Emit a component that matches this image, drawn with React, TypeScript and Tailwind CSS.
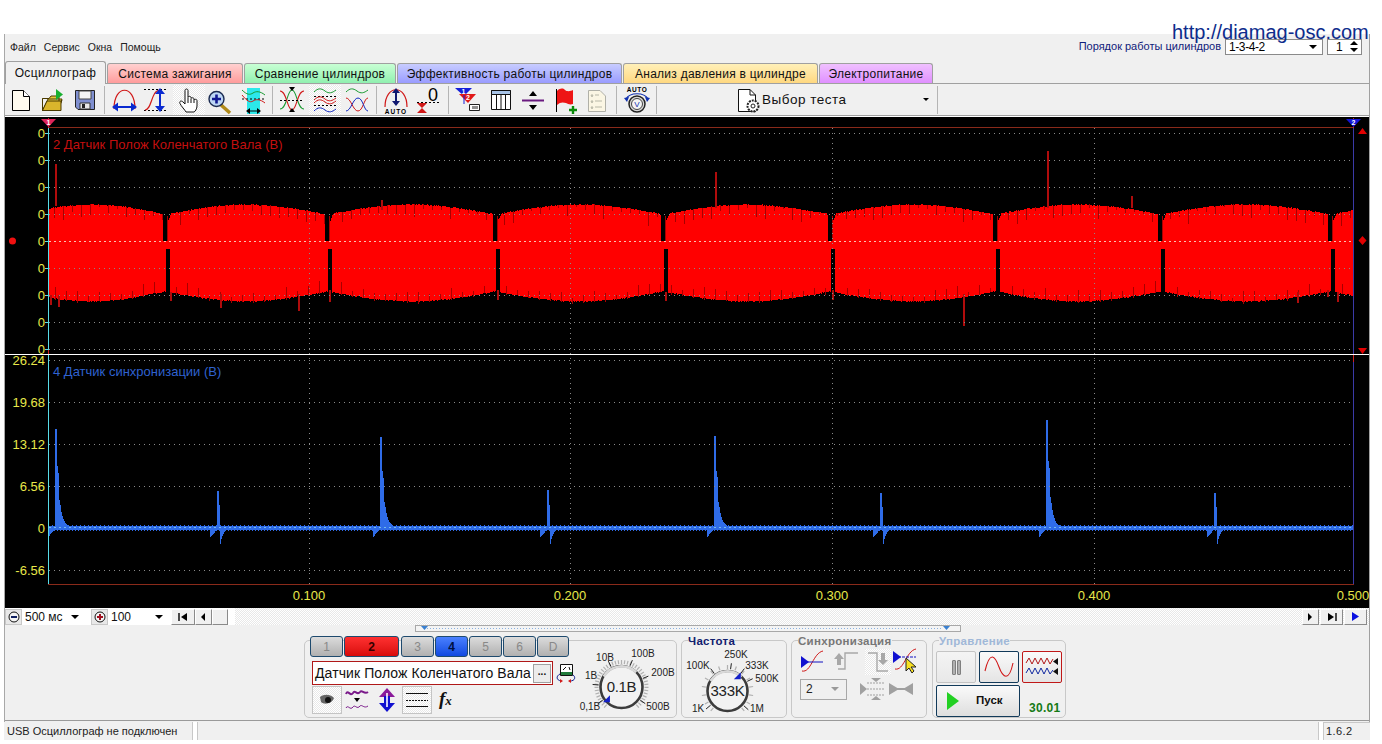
import type { ReactNode } from "react";

const FONT = "'Liberation Sans', Arial, sans-serif";

// simple seeded random so the wave is the same on each load
let seed = 12345;
const rnd = () => {
  seed = (seed * 1664525 + 1013904223) % 4294967296;
  return seed / 4294967296;
};

const gaps = [165, 327, 495, 663, 830, 995, 1160, 1330];

const buildRed = () => {
  let fill = "";
  let notch = "";
  const edges = [18, ...gaps, 1495];
  for (let x = 48; x < 1353; x++) {
    let i = 0;
    while (x > edges[i + 1]) i++;
    const t = (x - edges[i]) / (edges[i + 1] - edges[i]);
    const hump = Math.sin(Math.PI * t);
    const top = Math.round(214 - 10 * hump + rnd() * 1.2);
    const bot = Math.round(292 + 10 * hump - rnd() * 1.2);
    const g = gaps.find((v) => x >= v - 2 && x <= v + 6);
    if (g !== undefined) {
      const d = x - g;
      const upper = d >= -2 && d <= 2 ? 241 : top + Math.max(0, (6 - d) * 2);
      const lower = d >= 1 && d <= 4 ? 249 : bot;
      fill += `M${x + 0.5} ${upper}V${lower}`;
      if (d === 2) notch += `M${x + 0.5} 216V241`;
      continue;
    }
    fill += `M${x + 0.5} ${top}V${bot}`;
    if (x % 9 === 0) {
      notch += `M${x + 0.5} ${top}V${top + 2 + Math.round(rnd() * 12)}`;
    }
    if (x % 11 === 0) {
      notch += `M${x + 0.5} ${bot - 4 - Math.round(rnd() * 8)}V${bot + Math.round(rnd() * 2)}`;
    }
  }
  return { fill, notch };
};

const redSpikes: [number, number, number][] = [
  [55, 164, 206], [381, 200, 210], [715, 172, 208], [1047, 151, 208], [1131, 196, 208],
  [50, 295, 305], [58, 295, 307], [220, 294, 308], [298, 294, 311], [170, 292, 301],
  [329, 290, 302], [497, 290, 300], [963, 294, 326], [1297, 292, 303], [1337, 292, 302],
  [1327, 290, 297], [665, 292, 301], [832, 290, 300],
];

const buildBlue = () => {
  const big: [number, number][] = [[55, 98], [380, 90], [714, 91], [1046, 107]];
  const small: [number, number][] = [[218, 36], [548, 37], [881, 34], [1215, 34]];
  let d = "";
  for (let x = 48; x < 1353; x++) {
    let top = 525 + (x % 4 === 0 ? 0 : 1);
    let bot = 531 - (x % 3 === 0 ? 0 : 1);
    for (const [s, h] of big) {
      const dx = x - s;
      if (dx >= 0 && dx < 18) {
        const k =
          dx < 2 ? 1 : dx === 2 ? 0.62 : dx === 3 ? 0.55 : dx === 4 ? 0.28 : 0.22 * Math.exp(-(dx - 5) / 3);
        top = Math.min(top, Math.round(527 - h * k));
      }
      if (dx < 0 && dx >= -7) bot = Math.max(bot, Math.round(528 + 9 * (-dx / 7)));
    }
    for (const [s, h] of small) {
      const dx = x - s;
      if (dx >= -1 && dx <= 0) top = Math.min(top, 527 - h);
      if (dx === 1) top = Math.min(top, 527 - h * 0.6);
      if (dx >= 2 && dx < 14) bot = Math.max(bot, Math.round(528 + 16 * Math.exp(-(dx - 2) / 3)));
      if (dx < -1 && dx >= -8) bot = Math.max(bot, Math.round(528 + 9 * (-dx / 8)));
    }
    d += `M${x + 0.5} ${top}V${bot}`;
  }
  return d;
};

const red = buildRed();
const blue = buildBlue();

const Yellow = ({ x, y, children, anchor = "end" }: { x: number; y: number; children: ReactNode; anchor?: "end" | "middle" }) => (
  <text x={x} y={y} fontSize="13" fill="#e8e84a" textAnchor={anchor} fontFamily={FONT}>
    {children}
  </text>
);

// everything is drawn in page coordinates, viewBox starts where the panel starts
const Scope = () => {
  const topLines = [133, 160, 187, 214, 268, 295, 322, 349];
  const botLines = [360, 402, 444, 486, 570];
  return (
    <svg width="1364" height="491" viewBox="5 117 1364 491" className="block bg-black">
      <g shapeRendering="crispEdges">
        <path d={red.fill} stroke="#ff0000" fill="none" />
        <path d={red.notch} stroke="#a80000" fill="none" />
        {redSpikes.map(([x, a, b], i) => (
          <path key={i} d={`M${x + 1} ${a}V${b}`} stroke="#b00c0c" strokeWidth="2" />
        ))}
        <path d={blue} stroke="#2f6ce8" fill="none" />
        {[...topLines, ...botLines].map((y) => (
          <path key={y} d={`M49 ${y + 0.5}H1353`} stroke="#8a8a8a" strokeDasharray="1 4" />
        ))}
        {[309, 570, 832, 1094].map((x) => (
          <path key={x} d={`M${x + 0.5} 128V584`} stroke="#8a8a8a" strokeDasharray="1 4" />
        ))}
        <path d="M49 241.5H1353" stroke="#ffc0b0" strokeDasharray="2 3" />
        <path d="M49 527.5H1353" stroke="#78bce8" strokeDasharray="2 3" />
        <path d="M48 127.5H1354M48 584.5H1354" stroke="#8a2a1a" />
        <path d="M48.5 127V584" stroke="#58dde8" />
        <path d="M48.5 118V128M48.5 350V355" stroke="#d02020" />
        <path d="M1353.5 127V584" stroke="#3a3aa8" strokeWidth="1" />
        <path d="M1353.5 355V362M1353.5 118V128" stroke="#d02020" />
        <path d="M5 354.5H1369" stroke="#ffffff" />
        {topLines.concat(241).map((y) => (
          <path key={y} d={`M45 ${y + 0.5}H48`} stroke="#58dde8" />
        ))}
      </g>
      {[133, 160, 187, 214, 241, 268, 295, 322, 349].map((y) => (
        <Yellow key={y} x={45} y={y + 5}>0</Yellow>
      ))}
      <Yellow x={45} y={365}>26.24</Yellow>
      <Yellow x={45} y={407}>19.68</Yellow>
      <Yellow x={45} y={449}>13.12</Yellow>
      <Yellow x={45} y={491}>6.56</Yellow>
      <Yellow x={45} y={533}>0</Yellow>
      <Yellow x={45} y={575}>-6.56</Yellow>
      <Yellow x={309} y={600} anchor="middle">0.100</Yellow>
      <Yellow x={570} y={600} anchor="middle">0.200</Yellow>
      <Yellow x={832} y={600} anchor="middle">0.300</Yellow>
      <Yellow x={1094} y={600} anchor="middle">0.400</Yellow>
      <Yellow x={1353} y={600} anchor="middle">0.500</Yellow>
      <text x={53} y={149} fontSize="13" fill="#c40f0f" fontFamily={FONT}>2 Датчик Полож Коленчатого Вала (В)</text>
      <text x={53} y={376} fontSize="13" fill="#2f62d0" fontFamily={FONT}>4 Датчик синхронизации (В)</text>
      <path d="M41 119H56L48.5 127Z" fill="#e0245a" />
      <text x={48.5} y={125} fontSize="7" fontWeight="bold" fill="#fff" textAnchor="middle" fontFamily={FONT}>1</text>
      <path d="M1346 119H1361L1353.5 127Z" fill="#1414d8" />
      <text x={1353.5} y={125} fontSize="7" fontWeight="bold" fill="#fff" textAnchor="middle" fontFamily={FONT}>2</text>
      <circle cx={12.5} cy={241} r={3.5} fill="#f01010" />
      <path d="M1358 134L1362.5 128L1367 134ZM1358 348H1367L1362.5 354ZM1362.5 236L1366.5 240.5L1362.5 245L1358.5 240.5Z" fill="#e00000" />
    </svg>
  );
};

const Ico = ({ children }: { children: ReactNode }) => (
  <svg width="32" height="30" viewBox="0 0 32 30" className="block shrink-0">{children}</svg>
);

const Sep = () => <div className="w-px h-[28px] mx-[3px] bg-[#b4b4b4] shrink-0" />;

const dither = "bg-[repeating-conic-gradient(#ffffff_0_25%,#e8e8e8_0_50%)] bg-[length:2px_2px]";

const Toolbar = () => (
  <div className="h-[32px] flex items-center border-b border-[#a0a0a0] bg-[#f0f0f0]">
    <Ico><path d="M7.5 5.5H18.5L24.5 11.5V25.5H7.5Z" fill="#fffbef" stroke="#000" /><path d="M18.5 5.5V11.5H24.5" fill="#fff" stroke="#000" /></Ico>
    <Ico>
      <path d="M5.5 13.5H12L14 11H22V23L25 14H11L5.5 25.5H21L25 15" fill="#e8c93c" stroke="#4a3a00" />
      <path d="M5.5 13.5V25.5L10 16H24V25.5H5.5Z" fill="#d9b52c" stroke="#4a3a00" />
      <path d="M19 4L26 9.5L19 15Z" fill="#18b030" />
    </Ico>
    <Ico>
      <path d="M6.5 5.5H25.5V24.5H9L6.5 22Z" fill="#7f8fd0" stroke="#222" />
      <path d="M10 6H22V14H10Z" fill="#f4f4f4" stroke="#444" />
      <path d="M11 18H21V24H11Z" fill="#e8e8e8" stroke="#333" />
      <path d="M13 19H16V23H13Z" fill="#222" />
    </Ico>
    <Sep />
    <Ico>
      <path d="M6 24C6 -1 27 -1 27 24" fill="none" stroke="#d01818" strokeWidth="1.2" />
      <path d="M9 22H24" stroke="#0a2ad0" strokeWidth="2" />
      <path d="M4 22L10 17.5V26.5ZM29 22L23 17.5V26.5Z" fill="#0a2ad0" />
    </Ico>
    <Ico>
      <path d="M4 4.5H27M4 25.5H27" stroke="#000" strokeDasharray="2 2" />
      <path d="M5 25C12 25 11 5 20 5" fill="none" stroke="#d01818" strokeWidth="1.2" />
      <path d="M20 8V22" stroke="#0a2ad0" strokeWidth="2" />
      <path d="M20 3L25 9H15ZM20 27L25 21H15Z" fill="#0a2ad0" />
    </Ico>
    <div className={`w-[32px] h-[30px] ml-px ${dither}`}>
      <Ico>
        <path d="M12 14V5.5C12 3.5 15 3.5 15 5.5V12.5C15 11 18 11 18 12.5V13.5C18 12.5 21 12.5 21 14V15C21 14 24 14 24 15.5V21C24 24 22 26.5 21 27H13C12 25 8 21 7 18.5C6 16.5 8 15 10 17L12 19Z" fill="#fff" stroke="#111" />
        <path d="M15 13V18M18 14V18M21 15V18" stroke="#111" />
      </Ico>
    </div>
    <Ico>
      <path d="M15 19L25 28" stroke="#b08a1a" strokeWidth="3.5" />
      <circle cx="11.5" cy="14" r="7.5" fill="#bcd6f4" stroke="#1a2a50" strokeWidth="1.4" />
      <path d="M7 14H16M11.5 9.5V18.5" stroke="#101890" strokeWidth="2.6" />
    </Ico>
    <Ico>
      <path d="M10 3H23V29H10Z" fill="#2ce8ea" />
      <path d="M5 5C10 10 13 10 16 8C19 6 23 6 28 10" fill="none" stroke="#189a30" />
      <path d="M5 14H28" stroke="#000" strokeDasharray="2 2" />
      <path d="M5 10C10 16 13 18 16 16C19 14 23 14 28 18" fill="none" stroke="#d01818" />
      <path d="M11 26H22" stroke="#000" />
      <path d="M9 26L13 23V29ZM24 26L20 23V29Z" fill="#000" />
    </Ico>
    <Sep />
    <Ico>
      <path d="M4 24C11 24 11 5 16 5C21 5 21 24 28 24" fill="none" stroke="#1a9a30" strokeWidth="1.1" />
      <path d="M4 6C11 6 11 25 16 25C21 25 21 6 28 6" fill="none" stroke="#d01818" strokeWidth="1.1" />
      <path d="M4 15.5H28" stroke="#000" strokeDasharray="2 2" />
      <path d="M13 2H19L16 6ZM13 27H19L16 23Z" fill="#000" />
    </Ico>
    <div className={`w-[32px] h-[30px] ml-px ${dither}`}>
      <Ico>
        <path d="M5 7C9 3 12 3 16 6C20 9 23 8 27 5" fill="none" stroke="#189a30" />
        <path d="M5 11.5H27M5 20.5H27" stroke="#000" strokeDasharray="2 2" />
        <path d="M5 15C9 11 12 11 16 14C20 17 23 16 27 13M5 18C9 14 12 14 16 17C20 20 23 19 27 16" fill="none" stroke="#d01818" />
        <path d="M5 26C9 22 12 22 16 25C20 28 23 27 27 24" fill="none" stroke="#1028c0" />
      </Ico>
    </div>
    <Ico>
      <path d="M5 7C9 3 12 3 16 6C20 9 23 8 27 5" fill="none" stroke="#189a30" />
      <path d="M5 13C10 13 12 26 17 26C22 26 23 13 27 13" fill="none" stroke="#d01818" />
      <path d="M5 26C10 26 12 13 17 13C22 13 23 26 27 26" fill="none" stroke="#1028c0" />
    </Ico>
    <Sep />
    <Ico>
      <path d="M5 22C5 -1 27 -1 27 22" fill="none" stroke="#d01818" strokeWidth="1.2" />
      <path d="M16 7V18" stroke="#101870" strokeWidth="2" />
      <path d="M16 3L20 8H12ZM16 21L20 16H12Z" fill="#101870" />
      <text x="16" y="29" fontSize="6.5" fontWeight="bold" textAnchor="middle" fontFamily={FONT} letterSpacing="1">AUTO</text>
    </Ico>
    <div className="ml-px">
      <Ico>
        <path d="M4 17.5H26" stroke="#000" strokeDasharray="2 2" />
        <path d="M4 18H14L9 23ZM4 28H14L9 23Z" fill="#d01818" />
        <text x="20" y="16" fontSize="18" textAnchor="middle" fontFamily={FONT}>0</text>
      </Ico>
    </div>
    <Sep />
    <div className="ml-px">
      <Ico>
        <path d="M2 3H19L11 11Z" fill="#1420d8" />
        <path d="M6 9H23L15 18Z" fill="#e01818" />
        <text x="10.5" y="9" fontSize="7" fontWeight="bold" fill="#fff" textAnchor="middle" fontFamily={FONT}>1</text>
        <text x="15" y="15" fontSize="7" fontWeight="bold" fill="#fff" textAnchor="middle" fontFamily={FONT}>2</text>
        <path d="M11 10V19" stroke="#1420d8" />
        <path d="M16.5 19.5H26.5V25.5H16.5Z" fill="#fff" stroke="#222" />
        <path d="M20 21V24M22 21V24M24 21V24" stroke="#222" />
      </Ico>
    </div>
    <Ico>
      <path d="M6.5 5.5H25.5V24.5H6.5Z" fill="#fff" stroke="#111" />
      <path d="M6.5 5.5H25.5V9.5H6.5Z" fill="#a8c4e8" stroke="#111" />
      <path d="M11.5 10V24M16 10V24M20.5 10V24" stroke="#111" />
    </Ico>
    <Ico>
      <path d="M5 15.5H27" stroke="#6a1a80" strokeWidth="2" />
      <path d="M16 6L20 11H12ZM16 25L20 20H12Z" fill="#000" />
    </Ico>
    <Ico>
      <path d="M7.5 4V27" stroke="#000" />
      <path d="M8 6C11 3 14 3 16 5C18 7 22 6 24 5V19C21 20 19 19 17 18C14 17 11 17 8 20Z" fill="#ee1515" />
      <path d="M20 25H28M24 21V29" stroke="#0a8a0a" strokeWidth="2.4" />
    </Ico>
    <Ico>
      <path d="M7.5 5.5H19L24.5 11V26.5H7.5Z" fill="#fbf6e4" stroke="#b0b0a8" />
      <path d="M10 10H12L11 12ZM10 16H12L11 18ZM10 22H12L11 24ZM14 10H18M14 16H21M14 22H21" fill="none" stroke="#b8b8a8" />
    </Ico>
    <Sep />
    <div className="ml-[1px]">
      <Ico>
        <text x="16" y="7" fontSize="6.5" fontWeight="bold" textAnchor="middle" fontFamily={FONT} letterSpacing="0.6">AUTO</text>
        <path d="M5 14C9 7 23 7 27 14" fill="none" stroke="#1030b0" strokeWidth="1.2" />
        <path d="M3 13L8 12L6 17ZM29 13L24 12L26 17Z" fill="#1030b0" />
        <circle cx="16" cy="19" r="8" fill="#d8d8d8" stroke="#222" strokeWidth="1.5" />
        <circle cx="16" cy="19" r="5.5" fill="#f4f4f4" stroke="#444" />
        <text x="16" y="22" fontSize="8" textAnchor="middle" fontFamily={FONT} fill="#1030b0">V</text>
      </Ico>
    </div>
    <Sep />
    <div className="w-[277px] flex items-center h-[30px]">
      <div className="ml-[76px] shrink-0 w-[26px]">
        <svg width="24" height="26" viewBox="0 0 24 26" className="block">
          <path d="M2.5 2.5H14L19.5 8V24.5H2.5Z" fill="#fff" stroke="#111" />
          <path d="M14 2.5V8H19.5" fill="none" stroke="#111" />
          <circle cx="17" cy="19" r="5.5" fill="#fff" stroke="#222" strokeWidth="2" strokeDasharray="2 1" />
          <circle cx="17" cy="19" r="2" fill="#fff" stroke="#222" />
        </svg>
      </div>
      <span className="text-[13.5px] tracking-[0.5px] text-[#111] pt-[2px]">Выбор теста</span>
      <span className="ml-auto mr-[8px] w-0 h-0 border-x-[3px] border-x-transparent border-t-[3px] border-t-black" />
    </div>
    <div className="w-px h-[28px] bg-[#b4b4b4]" />
  </div>
);

const tabs = [
  { label: "Система зажигания", cls: "w-[136px] from-[#ffd0d0] to-[#ff9c9c]" },
  { label: "Сравнение цилиндров", cls: "w-[152px] from-[#c8ffd4] to-[#90f0b0]" },
  { label: "Эффективность работы цилиндров", cls: "w-[225px] from-[#c8ccff] to-[#9a9cff]" },
  { label: "Анализ давления в цилиндре", cls: "w-[195px] from-[#fff0b8] to-[#ffd880]" },
  { label: "Электропитание", cls: "w-[114px] from-[#f0c0ff] to-[#e090ff]" },
];

const TabStrip = () => (
  <div className="h-[24px] flex items-end gap-px border-b border-[#a0a0a0] relative">
    <div className="w-[101px] h-[23px] -mb-px bg-[#f0f0f0] border border-b-0 border-[#a0a0a0] rounded-t-[3px] flex items-center justify-center text-[12px] tracking-[0.4px] text-[#111] z-10">
      Осциллограф
    </div>
    {tabs.map((t) => (
      <div
        key={t.label}
        className={`h-[20px] bg-gradient-to-b ${t.cls} border border-b-0 border-[#a0a0a0] rounded-t-[3px] flex items-center justify-center text-[12px] tracking-[0.25px] text-[#111]`}
      >
        {t.label}
      </div>
    ))}
  </div>
);

const MenuRow = () => (
  <div className="h-[26px] flex items-center relative">
    <div className="flex gap-[8px] pl-[5px] text-[10.5px] text-[#222] pt-[1px]">
      <span>Файл</span>
      <span>Сервис</span>
      <span>Окна</span>
      <span>Помощь</span>
    </div>
    <div className="ml-auto flex items-center mr-[7px] -mt-[1px]">
      <span className="text-[11px] text-[#10207a] mr-[4px]">Порядок работы цилиндров</span>
      <div className="w-[98px] h-[16px] bg-white border border-[#8a8a8a] flex items-center pl-[3px] text-[12px] leading-[14px] tracking-[-0.4px]">
        1-3-4-2
        <span className="ml-auto mr-[5px] w-0 h-0 border-x-[4px] border-x-transparent border-t-[4px] border-t-black" />
      </div>
      <div className="w-[35px] h-[16px] ml-[4px] bg-white border border-[#8a8a8a] flex items-center pl-[8px] text-[12px] leading-[14px]">
        1
        <span className="ml-auto mr-[3px] flex flex-col gap-[3px]">
          <span className="block w-0 h-0 border-x-[4px] border-x-transparent border-b-[4px] border-b-black" />
          <span className="block w-0 h-0 border-x-[4px] border-x-transparent border-t-[4px] border-t-black" />
        </span>
      </div>
    </div>
  </div>
);

const NavBtn = ({ w, children }: { w: string; children: ReactNode }) => (
  <div className={`${w} h-[16px] bg-[#f0f0f0] border-r border-b border-[#8a8a8a] border-t border-l border-t-white border-l-white flex items-center justify-center`}>
    {children}
  </div>
);

const TimeBar = () => (
  <div className={`h-[17px] flex items-center ${dither}`}>
    <div className="w-[230px] h-[17px] bg-white flex items-center text-[12px] text-[#111]">
      <div className="w-[17px] h-[16px] bg-[#e8e8e8] border border-[#c8c8c8] flex items-center justify-center">
        <svg width="12" height="12" viewBox="0 0 12 12"><circle cx="6" cy="6" r="5" fill="#f4f4f4" stroke="#111" /><path d="M3 6H9" stroke="#102060" strokeWidth="2" /></svg>
      </div>
      <span className="w-[49px] pl-[3px]">500 мс</span>
      <span className="w-0 h-0 border-x-[4px] border-x-transparent border-t-[4px] border-t-black" />
      <span className="w-[12px]" />
      <div className="w-[17px] h-[16px] bg-[#e8e8e8] border border-[#c8c8c8] flex items-center justify-center">
        <svg width="12" height="12" viewBox="0 0 12 12"><circle cx="6" cy="6" r="5" fill="#f4f4f4" stroke="#111" /><path d="M3 6H9M6 3V9" stroke="#a01020" strokeWidth="2" /></svg>
      </div>
      <span className="w-[47px] pl-[3px]">100</span>
      <span className="w-0 h-0 border-x-[4px] border-x-transparent border-t-[4px] border-t-black" />
      <span className="w-[8px]" />
      <NavBtn w="w-[24px]"><svg width="10" height="8" viewBox="0 0 10 8"><path d="M1 0V8" stroke="#000" strokeWidth="1.4" /><path d="M9 0V8L3 4Z" /></svg></NavBtn>
      <NavBtn w="w-[17px]"><svg width="5" height="8" viewBox="0 0 5 8"><path d="M4 0V8L0 4Z" /></svg></NavBtn>
      <NavBtn w="w-[16px]"><span /></NavBtn>
    </div>
    <div className="ml-auto mr-[2px] flex gap-px">
      <NavBtn w="w-[17px]"><svg width="5" height="8" viewBox="0 0 5 8"><path d="M0 0V8L4 4Z" /></svg></NavBtn>
      <NavBtn w="w-[23px]"><svg width="10" height="8" viewBox="0 0 10 8"><path d="M1 0V8L7 4Z" /><path d="M9 0V8" stroke="#000" strokeWidth="1.4" /></svg></NavBtn>
      <NavBtn w="w-[23px]"><svg width="9" height="9" viewBox="0 0 9 9"><path d="M1 0V9L8 4.5Z" fill="#0a10e0" /></svg></NavBtn>
    </div>
  </div>
);

const Splitter = () => (
  <div className="h-[15px] relative">
    <div className="absolute left-[410px] top-0 w-[546px] h-[7px] bg-[#f4f4f4] border border-[#a8a8a8] flex items-center px-[3px] gap-[4px] overflow-hidden">
      <svg width="532" height="5" viewBox="0 0 532 5" className="block">
        <path d="M8 2.5H524" stroke="#8ab0e0" strokeDasharray="1 2" />
        <path d="M2 0H9L5.5 4ZM524 0H531L527.5 4Z" fill="#3a80d0" />
      </svg>
    </div>
  </div>
);

const chanBtn = "h-[21px] rounded-[3px] border border-[#1e4a6e] flex items-center justify-center text-[12px]";

const Knob = ({ labels, value, cx, cy, r, w, ang, thick, marks }: {
  labels: [string, number, number][];
  value: string;
  cx: number;
  cy: number;
  r: number;
  w: number;
  ang: number;
  thick: boolean;
  marks: number[];
}) => {
  const ticks: ReactNode[] = [];
  for (let a = -140; a <= 140; a += thick ? 7 : 20) {
    const rad = ((a - 90) * Math.PI) / 180;
    ticks.push(
      <line
        key={a}
        x1={cx + Math.cos(rad) * (r + 2)}
        y1={cy + Math.sin(rad) * (r + 2)}
        x2={cx + Math.cos(rad) * (r + 6)}
        y2={cy + Math.sin(rad) * (r + 6)}
        stroke="#b0b0b0"
        strokeWidth="1.2"
      />
    );
  }
  marks.forEach((a) => {
    const rad = ((a - 90) * Math.PI) / 180;
    ticks.push(
      <line
        key={`m${a}`}
        x1={cx + Math.cos(rad) * (r + 2)}
        y1={cy + Math.sin(rad) * (r + 2)}
        x2={cx + Math.cos(rad) * (r + 8)}
        y2={cy + Math.sin(rad) * (r + 8)}
        stroke="#222"
      />
    );
  });
  const rad = ((ang - 90) * Math.PI) / 180;
  const mx = cx + Math.cos(rad) * (r - 2);
  const my = cy + Math.sin(rad) * (r - 2);
  return (
    <svg width={w} height="76" viewBox={`0 0 ${w} 76`} className="block shrink-0">
      {ticks}
      <circle cx={cx} cy={cy} r={r} fill="#f2f2f2" stroke="#3c3c3c" strokeWidth="2.6" />
      <path d={`M${cx - r * 0.85} ${cy - r * 0.5}A${r} ${r} 0 0 1 ${cx + r * 0.7} ${cy - r * 0.7}`} fill="none" stroke="#d8d8d8" strokeWidth="2.6" />
      <path d={`M${mx - 4} ${my + 3}L${mx + 3} ${my - 4}L${mx + 3} ${my + 3}Z`} fill="#1420c8" />
      <text x={cx} y={cy + 5} fontSize="15" textAnchor="middle" fontFamily={FONT} fill="#222" letterSpacing="-0.3">{value}</text>
      {labels.map(([t, x, y]) => (
        <text key={t} x={x} y={y} fontSize="10" textAnchor="middle" fontFamily={FONT} fill="#222">{t}</text>
      ))}
    </svg>
  );
};

const Panel = ({ title, color, w, children }: { title?: string; color?: string; w: string; children: ReactNode }) => (
  <div className={`${w} h-[78px] relative rounded-[5px] border border-[#c8c8c8] shrink-0`}>
    {title && (
      <span className={`absolute left-[6px] -top-[6px] text-[11.5px] leading-[12px] font-bold bg-[#f0f0f0] tracking-[0.3px] ${color}`}>{title}</span>
    )}
    {children}
  </div>
);

const ChannelPanel = () => (
  <Panel w="w-[373px]">
    <div className="absolute -top-[5px] left-[5px] flex gap-px">
      <div className={`${chanBtn} w-[33px] bg-gradient-to-b from-[#dcdcdc] to-[#b0b0b0] text-[#888]`}>1</div>
      <div className={`${chanBtn} w-[55px] bg-gradient-to-b from-[#ff3030] to-[#d80808] font-bold text-[#300]`}>2</div>
      <div className={`${chanBtn} w-[33px] ml-px bg-gradient-to-b from-[#dcdcdc] to-[#b0b0b0] text-[#888]`}>3</div>
      <div className={`${chanBtn} w-[33px] bg-gradient-to-b from-[#4a80ff] to-[#1048e0] font-bold text-[#001040]`}>4</div>
      <div className={`${chanBtn} w-[33px] bg-gradient-to-b from-[#dcdcdc] to-[#b0b0b0] text-[#888]`}>5</div>
      <div className={`${chanBtn} w-[33px] bg-gradient-to-b from-[#dcdcdc] to-[#b0b0b0] text-[#888]`}>6</div>
      <div className={`${chanBtn} w-[32px] bg-gradient-to-b from-[#dcdcdc] to-[#b0b0b0] text-[#888]`}>D</div>
    </div>
    <div className="flex items-start h-full pt-[20px] pl-[7px]">
      <div className="w-[267px] shrink-0">
        <div className="flex items-center">
          <div className="w-[241px] h-[24px] bg-white border border-[#b01818] flex items-center pl-[2px] text-[14px] tracking-[0.1px] text-[#111] whitespace-nowrap overflow-hidden">
            Датчик Полож Коленчатого Вала
            <span className="absolute left-[228px] w-[18px] h-[19px] bg-[#ececec] border border-[#a0a0a0] text-[10px] font-bold leading-[14px] text-center">...</span>
          </div>
          <svg width="20" height="20" viewBox="0 0 20 20" className="ml-[3px] block">
            <path d="M4.5 1.5H16.5V12.5H4.5Z" fill="#fff" stroke="#111" />
            <path d="M5 9H16V12H5Z" fill="#207a3a" />
            <path d="M7 7L10 4M13 4L14 7" stroke="#111" />
            <path d="M4 11C0 13 0 17 5 18M17 12C20 14 19 18 14 18" fill="none" stroke="#102090" />
            <path d="M4 16L7 18L4 20ZM15 16L12 18L15 20Z" fill="#d01818" />
          </svg>
        </div>
        <div className="flex items-center mt-px">
          <div className={`w-[30px] h-[28px] border border-[#c4c4c4] flex items-center justify-center ${dither}`}>
            <svg width="16" height="12" viewBox="0 0 16 12"><path d="M1 3C5 0 11 0 15 4C13 10 5 11 2 8Z" fill="#666" /><circle cx="9" cy="6" r="3" fill="#111" /></svg>
          </div>
          <svg width="24" height="24" viewBox="0 0 24 24" className="ml-[3px] block">
            <path d="M1 6C3 1 5 9 8 5C10 1 12 8 15 4C17 1 19 7 23 4" fill="none" stroke="#7a1a8a" strokeWidth="2" />
            <path d="M9 10H15L12 14Z" fill="#000" />
            <path d="M1 20C3 16 5 23 8 19C10 16 12 22 15 18C17 16 19 21 23 18" fill="none" stroke="#7a1a8a" />
          </svg>
          <svg width="20" height="24" viewBox="0 0 20 24" className="ml-[8px] block">
            <path d="M10 0L18 9H2Z" fill="#8a1a9a" />
            <path d="M10 24L18 15H2Z" fill="#1010d0" />
            <path d="M7 8H13V16H7Z" fill="#1010d0" />
            <path d="M10 5V19" stroke="#fff" strokeWidth="1.6" />
          </svg>
          <div className={`w-[30px] h-[28px] ml-[5px] border border-[#c4c4c4] flex items-center justify-center ${dither}`}>
            <svg width="22" height="20" viewBox="0 0 22 20"><path d="M0 3.5H22M0 16.5H22" stroke="#111" /><path d="M0 10.5H22" stroke="#111" strokeDasharray="2 1" /></svg>
          </div>
          <span className="ml-[7px] font-['Liberation_Serif',serif] italic font-bold text-[19px] leading-[18px] text-[#111]">
            f<span className="text-[13px]">x</span>
          </span>
        </div>
      </div>
      <div className="-mt-[20px]">
        <Knob
          w={98}
          cx={42.5}
          cy={46}
          r={21}
          ang={-130}
          thick
          marks={[-125, -85, -27, 22, 68, 125]}
          value="0.1В"
          labels={[["10В", 26, 20], ["100В", 64, 16], ["1В", 12, 38], ["200В", 84, 35], ["0,1В", 11, 69], ["500В", 79, 69]]}
        />
      </div>
    </div>
  </Panel>
);

const FreqPanel = () => (
  <Panel title="Частота" color="text-[#10206e]" w="w-[106px]">
    <Knob
      w={104}
      cx={45.5}
      cy={50}
      r={20}
      ang={35}
      thick={false}
      marks={[-37, 8, 37, 64, -130, 132]}
      value="333K"
      labels={[["250K", 54, 17], ["100K", 16, 28], ["333K", 75, 28], ["500K", 85, 41], ["1K", 16, 71], ["1M", 75, 71]]}
    />
  </Panel>
);

const SyncPanel = () => (
  <Panel title="Синхронизация" color="text-[#777]" w="w-[136px]">
    <div className="flex items-center pt-[8px] pl-[7px] gap-[1px]">
      <svg width="32" height="26" viewBox="0 0 32 26" className="block">
        <path d="M3 22C12 24 14 4 24 2" fill="none" stroke="#d01818" />
        <path d="M2 13H24" stroke="#1010c0" />
        <path d="M2 7L10 13L2 19Z" fill="#1010d0" />
      </svg>
      <svg width="32" height="26" viewBox="0 0 32 26" className="block">
        <path d="M6 20H13V4H26" fill="none" stroke="#a8a8a8" strokeWidth="1.4" />
        <path d="M7 4L12 10H9V16H5V10H2Z" fill="#a8a8a8" />
      </svg>
      <div className={`w-[26px] h-[26px] ${dither}`}>
        <svg width="26" height="26" viewBox="0 0 26 26" className="block">
          <path d="M3 4H12V22H23" fill="none" stroke="#a8a8a8" strokeWidth="1.4" />
          <path d="M16 4H20V11H23L18 16L13 11H16Z" fill="#a8a8a8" />
        </svg>
      </div>
      <svg width="34" height="28" viewBox="0 0 34 28" className="block -mt-[2px]">
        <path d="M3 22C12 24 14 4 24 2" fill="none" stroke="#d01818" />
        <path d="M2 10H24" stroke="#1010c0" strokeDasharray="3 1" />
        <path d="M1 4L9 10L1 16Z" fill="#1010d0" />
        <path d="M14 11V24L17 21L20 26L22 24L19 20H24Z" fill="#f8e020" stroke="#222" />
      </svg>
    </div>
    <div className="flex items-center pl-[8px] mt-[3px]">
      <div className="w-[47px] h-[21px] border border-[#a8a8a8] flex items-center pl-[5px] text-[12px] text-[#222]">
        2
        <span className="ml-auto mr-[7px] w-0 h-0 border-x-[4px] border-x-transparent border-t-[4px] border-t-[#999]" />
      </div>
      <svg width="26" height="22" viewBox="0 0 26 22" className="block ml-[12px]">
        <path d="M1 5L8 11L1 17Z" fill="#a0a0a0" />
        <path d="M8 5H25M8 17H25M8 11H25" stroke="#a0a0a0" strokeDasharray="2 1" />
        <path d="M12 0H22L17 4ZM12 22H22L17 18Z" fill="#a0a0a0" />
      </svg>
      <svg width="24" height="14" viewBox="0 0 24 14" className="block ml-[4px]">
        <path d="M0 1L10 7L0 13ZM24 1L14 7L24 13Z" fill="#a0a0a0" />
        <path d="M0 7H24" stroke="#a0a0a0" strokeWidth="2" />
      </svg>
    </div>
  </Panel>
);

const ControlPanel = () => (
  <Panel title="Управление" color="text-[#a0b8d8]" w="w-[134px] ml-px">
    <div className="flex gap-[3px] pt-[10px] pl-[3px]">
      <div className="w-[40px] h-[32px] rounded-[2px] border border-[#c4c4c4] bg-gradient-to-b from-[#f4f4f4] to-[#e8e8e8] flex items-center justify-center gap-px">
        <span className="w-[4px] h-[15px] rounded-[1px] bg-[#b0b0b0] border border-[#808080]" />
        <span className="w-[4px] h-[15px] rounded-[1px] bg-[#b0b0b0] border border-[#808080]" />
      </div>
      <div className="w-[40px] h-[32px] rounded-[2px] border border-[#123a5a] bg-gradient-to-b from-[#fafafa] to-[#e4e4e4] flex items-center justify-center">
        <svg width="30" height="22" viewBox="0 0 30 22"><path d="M1 15C6 -6 11 0 15 11C19 22 25 26 29 7" fill="none" stroke="#d01818" strokeWidth="1.1" /></svg>
      </div>
      <div className="w-[40px] h-[32px] rounded-[2px] border border-[#c01818] bg-gradient-to-b from-[#fafafa] to-[#e4e4e4] flex items-center justify-center">
        <svg width="34" height="24" viewBox="0 0 34 24">
          <path d="M1 8L4 3L7 9L10 3L13 9L16 3L19 9L22 3L25 9L28 4" fill="none" stroke="#b01818" />
          <path d="M1 18L4 13L7 19L10 13L13 19L16 13L19 19L22 13L25 19L28 15" fill="none" stroke="#1028a0" />
          <path d="M33 3V10L28 6.5ZM33 13V20L28 16.5Z" fill="#111" />
        </svg>
      </div>
    </div>
    <div className="flex items-center pl-[3px] mt-[2px]">
      <div className="w-[84px] h-[32px] rounded-[2px] border border-[#123a5a] bg-gradient-to-b from-[#fafafa] to-[#dedede] flex items-center">
        <svg width="14" height="20" viewBox="0 0 14 20" className="ml-[9px] block"><path d="M1 1L13 10L1 19Z" fill="#22d022" /></svg>
        <span className="ml-[16px] text-[11.5px] font-bold text-[#111]">Пуск</span>
      </div>
      <span className="ml-[9px] mt-[13px] text-[12px] font-bold text-[#157a15] tracking-[0.3px]">30.01</span>
    </div>
  </Panel>
);

const StatusBar = () => (
  <div className="h-[18px] flex gap-[4px] text-[11px] text-[#222]">
    <div className="w-[189px] bg-[#f0f0f0] border-r border-[#c8c8c8] flex items-center pl-[3px]">USB Осциллограф не подключен</div>
    <div className="w-[1122px] bg-[#f0f0f0] border-l border-r border-[#c8c8c8]" />
    <div className="flex-1 bg-[#f0f0f0] border-l border-t border-[#c8c8c8] flex items-center pl-[2px] text-[11px] tracking-[0.4px]">1.6.2</div>
  </div>
);

export default function App() {
  return (
    <div className="w-[1382px] h-[744px] bg-white overflow-hidden relative pt-[34px] pl-[4px]" style={{ fontFamily: FONT }}>
      <a className="absolute z-20 left-[1172px] top-[21px] text-[20px] leading-[22px] text-[#0d2c8c]">http://diamag-osc.com</a>
      <div className="w-[1366px] border-x border-[#a0a0a0] border-l-[#a8a8a8] bg-[#f0f0f0]">
        <MenuRow />
        <TabStrip />
        <Toolbar />
        <div className="h-px bg-white" />
        <Scope />
        <TimeBar />
        <Splitter />
        <div className="flex h-[80px] pl-[299px] gap-[4px]">
          <ChannelPanel />
          <FreqPanel />
          <SyncPanel />
          <ControlPanel />
        </div>
        <div className="h-px bg-[#9a9a9a]" />
        <div className="h-px" />
      </div>
      <div className="w-[1366px]"><StatusBar /></div>
    </div>
  );
}
